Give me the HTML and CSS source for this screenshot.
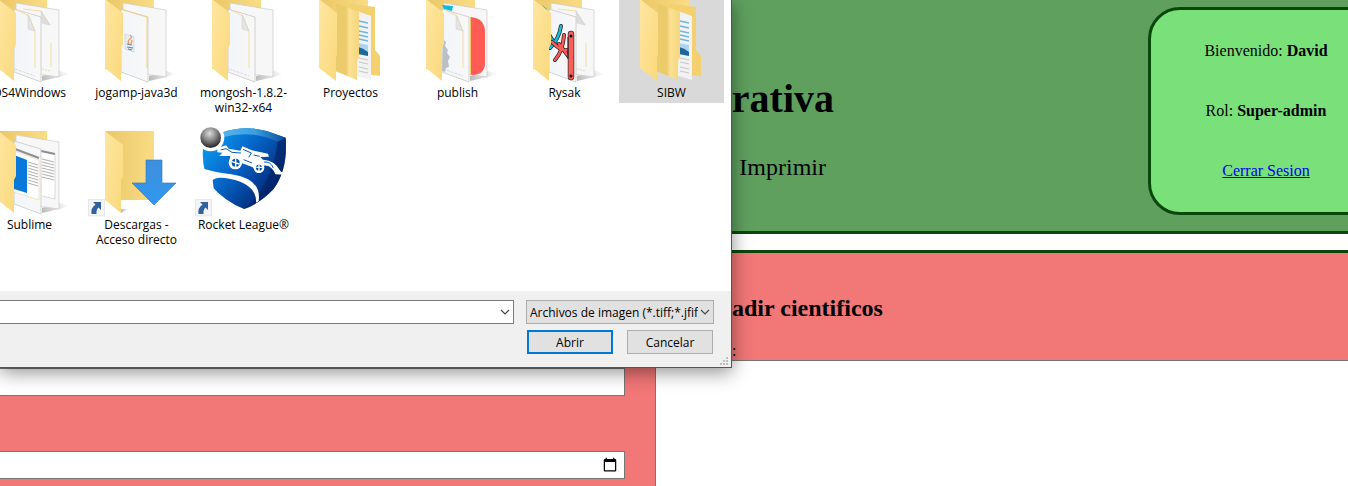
FILE: index.html
```html
<!DOCTYPE html>
<html lang="es">
<head>
<meta charset="utf-8">
<title>Zona administrativa</title>
<link rel="stylesheet" href="styles.css">
</head>
<body>
<svg class="defs" aria-hidden="true">
  <defs>
    <linearGradient id="gold" x1="0" x2="1" y1="0" y2="1"><stop offset="0" stop-color="#ffe6a0"/><stop offset="1" stop-color="#fad97c"/></linearGradient>
    <linearGradient id="back" x1="0" x2="1"><stop offset="0" stop-color="#ebc767"/><stop offset="1" stop-color="#f9dc85"/></linearGradient>
    <linearGradient id="paper" x1="0" x2="1"><stop offset="0" stop-color="#f3f5f8"/><stop offset="1" stop-color="#f8f8f8"/></linearGradient>
    <linearGradient id="inner" x1="0" x2="1"><stop offset="0" stop-color="#eccb6c"/><stop offset=".45" stop-color="#eccb6c"/><stop offset=".6" stop-color="#fbe194"/><stop offset="1" stop-color="#f6d67c"/></linearGradient>
    <linearGradient id="arrow" x1="0" x2="0" y1="0" y2="1"><stop offset="0" stop-color="#3f8fdc"/><stop offset="1" stop-color="#2f98ee"/></linearGradient>
    <linearGradient id="shade" x1="0" x2="1"><stop offset="0" stop-color="#bbb"/><stop offset="1" stop-color="#bbb" stop-opacity="0"/></linearGradient>
    <linearGradient id="shield" x1="0" y1=".1" x2=".9" y2=".8"><stop offset="0" stop-color="#0aa0f5"/><stop offset=".5" stop-color="#0562c4"/><stop offset="1" stop-color="#021f6b"/></linearGradient>
    <linearGradient id="rim" x1="0" x2="1"><stop offset="0" stop-color="#54b4ea"/><stop offset=".5" stop-color="#3ba0e0"/><stop offset="1" stop-color="#0b4b9c"/></linearGradient>
    <radialGradient id="ball" cx=".45" cy=".3" r=".65"><stop offset="0" stop-color="#ddd"/><stop offset=".5" stop-color="#8a8a8a"/><stop offset="1" stop-color="#303030"/></radialGradient>
    <symbol id="cover" viewBox="0 0 97 98"><path fill="url(#gold)" d="M17 12 35 26V57L33 61V94L17 81Z"/></symbol>
    <symbol id="rear" viewBox="0 0 97 98">
      <path fill="url(#back)" d="M17 12H66V82H17Z"/>
      <path fill="url(#shade)" d="M61 89 79 84 88 87 79 90 61 94Z"/>
      <path fill="#f7f7f8" stroke="#cfcfcf" stroke-width=".8" d="M35 16 78 23V90L35 84Z"/>
    </symbol>
    <symbol id="front" viewBox="0 0 97 98">
      <path fill="url(#paper)" stroke="#c8c8c8" stroke-width=".8" d="M33 22 60 30V95L33 85Z"/>
    </symbol>
    <symbol id="doc" viewBox="0 0 97 98">
      <path fill="none" stroke="#f5dda0" d="M36 23 48 29 54 44V81"/>
      <path fill="#e4e4e4" stroke="#ccc" stroke-width=".5" d="M47 28V42L54 44Z"/>
      <path fill="none" stroke="#d2d2d2" stroke-width=".8" stroke-dasharray="3 1" d="M34 82 54 89"/>
    </symbol>
    <symbol id="reardoc" viewBox="0 0 97 98">
      <path fill="none" stroke="#f5dda0" d="M42 22 60 24 69 38M70 56V80"/>
      <path fill="#dedede" stroke="#ccc" stroke-width=".5" d="M60 24 61 36 69 38Z"/>
      <path stroke="#d2d2d2" stroke-width=".8" stroke-dasharray="2 1" d="M61 82 70 84"/>
    </symbol>
    <symbol id="nested" viewBox="0 0 97 98">
      <path fill="url(#back)" d="M17 12H66V80H17Z"/>
      <path fill="#f3d171" d="M34 15 73 20V63L78 69V89L55 86Z"/>
      <path fill="#f2f2f2" d="M55 24 69 29V93L55 89Z"/>
      <path stroke="#6eb5e2" stroke-width="1.3" d="M57 34 66 36M57 39 66 41M57 44 66 46M57 48 66 50M57 52 66 54"/>
      <path fill="#a9d4f4" d="M56 56 66 58V69L56 67Z"/>
      <path fill="#1e6796" d="M56 60Q61 61 66 65V69L56 67Z"/>
      <path stroke="#c6c6c6" d="M57 71 66 73M57 75 66 77M57 80 66 82M57 84 66 86"/>
      <path fill="url(#inner)" d="M34 16 57 25V70L55 74V93L33 84Z"/>
      <path fill="url(#gold)" d="M17 12 35 26V67L34 71V94L17 81Z"/>
    </symbol>
    <symbol id="shortcut" viewBox="0 0 97 98">
      <path fill="#f4f4f4" stroke="#dcdcdc" stroke-width=".6" d="M.5 80.500H16.500V97H.5Z"/>
      <path fill="#31619f" d="M5 83H13V91L10.500 88.500Q8 91 8.500 95H3.500Q2.500 89 7.500 85.500Z"/>
    </symbol>
    <symbol id="chevron" viewBox="0 0 10 10"><path d="M1 3 5 7 9 3" fill="none" stroke="#444" stroke-width="1.100"/></symbol>
  </defs>
</svg>

<header class="site-header">
  <div class="site-title">
    <h1>rativa</h1>
    <nav><a>Imprimir</a></nav>
  </div>
  <aside class="user-card">
    <p>Bienvenido: <strong>David</strong></p>
    <p>Rol: <strong>Super-admin</strong></p>
    <p><a href="#salir">Cerrar Sesion</a></p>
  </aside>
</header>

<main class="editor">
  <h2>adir cientificos</h2>
  <form class="editor-form">
    <div class="fields">
      <input type="text" aria-label="Lugar">
      <input type="date" aria-label="Fecha">
    </div>
    <div class="biography">
      <label for="bio">:</label>
      <textarea id="bio"></textarea>
    </div>
  </form>
</main>

<section class="file-dialog" role="dialog" aria-label="Abrir">
  <ul class="files">
    <li class="file"><svg viewBox="0 0 97 98"><use href="#rear"/><use href="#reardoc"/><use href="#front"/><use href="#doc"/><use href="#cover"/></svg><span>DS4Windows</span></li>
    <li class="file"><svg viewBox="0 0 97 98"><use href="#rear"/><use href="#front"/><path d="M35 23 59 30V81" fill="none" stroke="#edd28d"/><path fill="#e7edf2" stroke="#c3ccd4" stroke-width=".6" d="M37 47 46 50V65L37 62Z"/><path d="M41 57Q39 54 42 52T42 48M43 57 44 53" fill="none" stroke="#ee9a60" stroke-width="1.300"/><path d="M39 57 44 58M39 60 45 61M40 62 44 63" stroke="#66839d" stroke-width="1.200"/><use href="#cover"/></svg><span>jogamp-java3d</span></li>
    <li class="file"><svg viewBox="0 0 97 98"><use href="#rear"/><use href="#front"/><use href="#doc"/><use href="#cover"/></svg><span>mongosh-1.8.2-win32-x64</span></li>
    <li class="file"><svg viewBox="0 0 97 98"><use href="#nested"/></svg><span>Proyectos</span></li>
    <li class="file"><svg viewBox="0 0 97 98"><use href="#rear"/><path fill="#ff5c55" d="M61 30Q76 31 76 45V76Q76 88 63 88L61 87Z"/><path d="M61.500 30V87" stroke="#f3c66a"/><use href="#front"/><path fill="#12bada" d="M33 18 44 19 43 24 35 22Z"/><use href="#doc"/><path fill="#bac0c5" d="M34 52 37 55 36 59 39 63 38 66 41 70 39 74 40 80 37 81 36 85 33 84Z"/><use href="#cover"/></svg><span>publish</span></li>
    <li class="file"><svg viewBox="0 0 97 98"><use href="#rear"/><use href="#reardoc"/><use href="#front"/><path fill="#12bada" d="M26 18 31 22V26Z"/>
      <g fill="none" stroke-linecap="round"><path stroke="#222" stroke-width="4" d="M34 61Q43 52 45 39M34 49Q37 56 45 60"/><path stroke="#18bada" stroke-width="2.500" d="M34 61Q43 52 45 39M34 49Q37 56 45 60"/><path stroke="#222" stroke-width="4" d="M39 73Q47 64 48 48M36 55Q46 65 51 63M43 57 53 70"/><path stroke="#f65b56" stroke-width="2.500" d="M39 73Q47 64 48 48M36 55Q46 65 51 63M43 57 53 70"/><path stroke="#333" stroke-width="6.500" d="M55 47V90"/><path stroke="#ff5d57" stroke-width="5" d="M55 47V90"/></g>
      <path stroke="#222" d="M52 50V72"/><circle cx="55" cy="49" r="1.500"/><circle cx="55" cy="89" r="1.500"/><use href="#cover"/></svg><span>Rysak</span></li>
    <li class="file selected"><svg viewBox="0 0 97 98"><use href="#nested"/></svg><span>SIBW</span></li>
    <li class="file"><svg viewBox="0 0 97 98"><use href="#rear"/><path d="M60 32 74 35V80L61 77" fill="#fff" stroke="#ccc" stroke-width=".7"/><path d="M60 32 74 35" stroke="#8c8f94" stroke-width="2"/><path stroke="#a6a6a6" stroke-width=".9" d="M61 40 73 43M61 43 73 46M61 46 73 49M61 49 73 52M61 52 73 55M61 55 73 58M61 58 73 61"/><use href="#front"/><path d="M34 30 58 39" stroke="#8c8f94" stroke-width="2"/><path fill="#fff" stroke="#e4d3a2" stroke-width=".6" d="M33 32 58 41V81L33 73Z"/><path fill="#0878da" d="M33 36 46 41V74L33 70Z"/><path stroke="#a6a6a6" stroke-width=".9" d="M47 43 57 46M47 46 57 49M47 49 57 52M47 52 57 55M47 55 57 58M47 58 57 61M47 61 57 64M47 64 57 67"/><use href="#cover"/></svg><span>Sublime</span></li>
    <li class="file"><svg viewBox="0 0 97 98"><path fill="url(#back)" d="M17 12H66V81H17Z"/><path fill="url(#shade)" d="M33 90 41 90 33 94Z"/><use href="#cover"/><path fill="url(#arrow)" stroke="#2876bf" stroke-width=".6" d="M58 41H74V64H88L66 86 44 64H58Z"/><use href="#shortcut"/></svg><span>Descargas - Acceso directo</span></li>
    <li class="file"><svg viewBox="0 0 97 98">
      <g transform="translate(-5 1) scale(.3333)">
        <path fill="url(#shield)" d="M98 37Q164 15 230 33L287 53Q294 150 250 208Q209 251 162 267Q103 243 64 197Q34 150 39 85Z"/>
        <path fill="url(#rim)" d="M98 37Q164 15 230 33L287 53 263 65Q181 28 98 52Z"/>
        <path fill="#022468" d="M263 65 287 53Q294 150 250 208Q209 251 162 267Q245 199 263 65Z" opacity=".7"/>
        <circle cx="62" cy="53" r="41" fill="#fff"/><circle cx="62" cy="53" r="31" fill="url(#ball)"/>
        <path fill="#fff" d="M30 143Q80 158 124 163Q216 177 206 243L199 248Q199 193 122 177Q77 168 68 181L71 205 52 200Z"/>
        <path fill="#fff" d="M82 84 109 76 116 86 151 92 157 79 186 91 234 101 237 110 211 111 219 119Q255 121 271 153L284 164 256 163Q244 132 219 137L218 153 203 159 188 142 157 130 143 146 117 132 121 108 88 108 97 98 82 97Z"/>
        <circle cx="136" cy="128" r="20" fill="#fff"/><circle cx="137" cy="128" r="12" fill="#0755a9"/><circle cx="207" cy="143" r="16" fill="#fff"/><circle cx="207" cy="143" r="9" fill="#064798"/>
        <path d="M137 116V141M126 125 148 132M199 142H216M207 134V153" stroke="#fff" stroke-width="4"/>
        <path d="M92 90 108 86 126 97 153 99M159 88 184 99 176 112M191 105 209 109M161 119 186 129M222 126Q242 124 250 144" fill="none" stroke="#075bb5" stroke-width="3"/>
      </g><use href="#shortcut"/></svg><span>Rocket League®</span></li>
  </ul>
  <form class="dialog-footer">
    <div class="name-row">
      <div class="combo"><input type="text" aria-label="Nombre"><svg class="chevron"><use href="#chevron"/></svg></div>
      <div class="combo filter"><select aria-label="Tipo de archivo"><option>Archivos de imagen (*.tiff;*.jfif;</option></select><svg class="chevron"><use href="#chevron"/></svg></div>
    </div>
    <div class="actions">
      <button class="primary" type="button">Abrir</button>
      <button type="button">Cancelar</button>
    </div>
    <svg class="grip" viewBox="0 0 8 8" aria-hidden="true"><path fill="#bfbfbf" d="M6 0h2v2H6zM3 3h2v2H3zM6 3h2v2H6zM0 6h2v2H0zM3 6h2v2H3zM6 6h2v2H6z"/></svg>
  </form>
</section>
</body>
</html>
```
FILE: styles.css
```css
* { box-sizing: border-box; }

body {
  margin: 0;
  min-height: 100vh;
  display: flex;
  flex-direction: column;
  gap: 16px;
  overflow: hidden;
  background: #fff;
  color: #000;
  font: 16px/18px "Liberation Serif", serif;
}

.defs { position: absolute; width: 0; height: 0; }

/* Header */
.site-header {
  display: flex;
  justify-content: space-between;
  align-items: flex-start;
  padding: 7px 0 16px;
  overflow: hidden;
  background: #5fa05f;
  border-bottom: 3px solid #0a470a;
}
.site-title {
  width: 834px;
  padding-top: 69px;
  text-align: right;
}
.site-title h1 {
  margin: 0;
  font-size: 40px;
  line-height: 46px;
}
.site-title nav {
  padding: 31px 8px 0 0;
  font-size: 24px;
  line-height: 28px;
}
.user-card {
  width: 236px;
  flex: none;
  display: flex;
  flex-direction: column;
  gap: 42px;
  margin-right: -36px;
  padding: 32px 0;
  text-align: center;
  background: #7ae07a;
  border: 3px solid #0a470a;
  border-radius: 32px;
}
.user-card p { margin: 0; }
.user-card a { color: #00e; }

/* Editor */
.editor {
  flex: 1;
  display: flex;
  flex-direction: column;
  background: #f27777;
  border-top: 3px solid #0a470a;
}
.editor h2 {
  margin: 42px 0 0 732px;
  font-size: 24px;
  line-height: 27px;
}
.editor-form {
  flex: 1;
  display: flex;
  gap: 30px;
  padding-top: 20px;
}
.fields {
  width: 785px;
  flex: none;
  display: flex;
  flex-direction: column;
  gap: 55px;
  margin-left: -160px;
  padding-top: 26px;
}
.fields input {
  width: 100%;
  height: 28px;
  padding: 1px 4px;
  background: #fff;
  border: 1px solid #767676;
  border-radius: 0;
  font-size: 16px;
}
.biography {
  flex: 1;
  display: flex;
  flex-direction: column;
}
.biography label { margin-left: 77px; }
.biography textarea {
  flex: 1;
  resize: none;
  background: #fff;
  border: solid #767676;
  border-width: 1px 0 0 1px;
}

/* File picker, floating over the page */
.file-dialog {
  position: absolute;
  top: 0;
  left: 0;
  width: 732px;
  overflow: hidden;
  background: #fff;
  border: solid #555;
  border-width: 0 1px 1px 0;
  box-shadow: 0 4px 18px rgba(0, 0, 0, .45);
  font: 12px/15px "Open Sans", sans-serif;
}
.files {
  display: grid;
  grid-template-columns: repeat(7, 105px);
  grid-auto-rows: 132px;
  align-items: start;
  column-gap: 2px;
  margin: -13px 0 0 -23px;
  padding: 0 0 40px;
  list-style: none;
}
.file {
  display: flex;
  flex-direction: column;
  padding: 0 4px 3px;
  text-align: center;
}
.file svg { width: 97px; height: 98px; }
.file.selected { background: #d9d9d9; }

.dialog-footer {
  position: relative;
  display: flex;
  flex-direction: column;
  gap: 6px;
  padding: 9px 17px 13px 0;
  background: #f0f0f0;
}
.name-row { display: flex; gap: 12px; }
.combo { flex: 1; display: grid; align-items: center; }
.combo > * { grid-area: 1 / 1; }
.combo input,
.combo select {
  width: 100%;
  height: 24px;
  border: 1px solid #7a7a7a;
  border-left-width: 0;
  border-radius: 0;
  background: #fff;
  font: inherit;
}
.filter { flex: 0 0 188px; }
.combo select {
  appearance: none;
  padding: 0 15px 0 3px;
  color: #000;
  background: #e1e1e1;
  border: 1px solid #adadad;
}
.chevron {
  width: 10px;
  height: 10px;
  margin-right: 4px;
  justify-self: end;
  pointer-events: none;
}
.actions {
  display: flex;
  justify-content: flex-end;
  gap: 14px;
  padding-right: 1px;
}
.actions button {
  width: 86px;
  height: 24px;
  padding: 0;
  font: inherit;
  color: #000;
  background: #e1e1e1;
  border: 1px solid #adadad;
}
.actions .primary { border: 2px solid #0078d7; }
.grip {
  position: absolute;
  right: 3px;
  bottom: 2px;
  width: 8px;
  height: 8px;
}
```
